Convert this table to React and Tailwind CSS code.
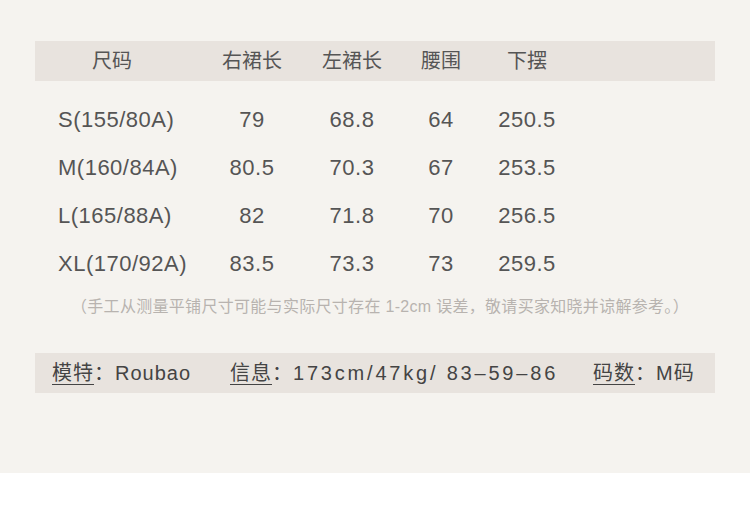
export default function App() {
  const rows = [
    ["S(155/80A)", "79", "68.8", "64", "250.5"],
    ["M(160/84A)", "80.5", "70.3", "67", "253.5"],
    ["L(165/88A)", "82", "71.8", "70", "256.5"],
    ["XL(170/92A)", "83.5", "73.3", "73", "259.5"],
  ];
  const font = { fontFamily: '"Liberation Sans", "Noto Sans CJK SC", sans-serif' };
  return (
    <div className="w-[750px] bg-white">
      <div
        className="bg-[#f5f3ef] pt-[41px] pb-[80px] text-[#555]"
        style={font}
      >
        <div className="mx-[35px] h-[40px] bg-[#e8e3de] grid grid-cols-[154px_126px_74px_104px_68px] items-center text-[20px]">
          <div className="text-center">尺码</div>
          <div className="text-center">右裙长</div>
          <div className="text-center">左裙长</div>
          <div className="text-center">腰围</div>
          <div className="text-center">下摆</div>
        </div>
        <div className="mx-[35px] mt-[14px]">
          {rows.map((r) => (
            <div
              key={r[0]}
              className="h-[48px] grid grid-cols-[154px_126px_74px_104px_68px] items-center text-[22px] tracking-[0.5px]"
            >
              <div className="pl-[23px] whitespace-nowrap">{r[0]}</div>
              <div className="text-center">{r[1]}</div>
              <div className="text-center">{r[2]}</div>
              <div className="text-center">{r[3]}</div>
              <div className="text-center">{r[4]}</div>
            </div>
          ))}
        </div>
        <div className="mt-[8px] h-[24px] flex items-center justify-center pl-[10px] text-[16px] tracking-[0.3px] text-[#b8b3af] whitespace-nowrap">
          （手工从测量平铺尺寸可能与实际尺寸存在 1-2cm 误差，敬请买家知晓并谅解参考。）
        </div>
        <div className="mx-[35px] mt-[34px] h-[40px] bg-[#e8e3de] flex items-center pl-[17px] text-[20px] tracking-[1px] text-[#444] whitespace-nowrap">
          <div className="w-[178px]">
            <span className="underline underline-offset-[4px] decoration-1">模特</span>：Roubao
          </div>
          <div className="w-[363px]">
            <span className="underline underline-offset-[4px] decoration-1">信息</span>：<span className="tracking-[2.8px]">173cm/47kg/ 83–59–86</span>
          </div>
          <div>
            <span className="underline underline-offset-[4px] decoration-1">码数</span>：M码
          </div>
        </div>
      </div>
      <div className="h-[37px] bg-white" />
    </div>
  );
}
